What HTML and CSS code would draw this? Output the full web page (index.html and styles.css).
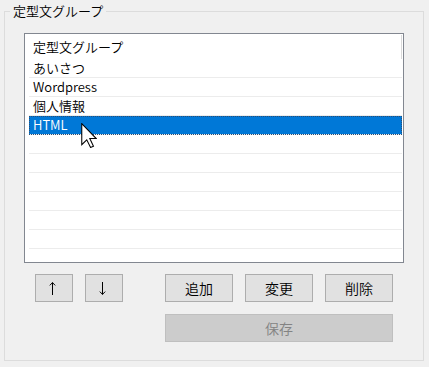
FILE: index.html
```html
<!DOCTYPE html>
<html lang="ja">
<head>
<meta charset="utf-8">
<link rel="stylesheet" href="styles.css">
</head>
<body>
<div class="group">
  <span class="legend">定型文グループ</span>
  <div class="listbox">
    <div class="row first">定型文グループ</div>
    <div class="row">あいさつ</div>
    <div class="row">Wordpress</div>
    <div class="row">個人情報</div>
    <div class="row selected">HTML</div>
    <div class="row"></div>
    <div class="row"></div>
    <div class="row"></div>
    <div class="row"></div>
    <div class="row"></div>
    <div class="row"></div>
    <span class="scrollmark"></span>
    <svg class="cursor" width="16" height="25" viewBox="0 0 12 19"><polygon points="0.5,0.5 0.5,16.5 4.3,12.8 7.2,18.6 9.4,17.6 6.6,11.8 11.5,11.8" fill="#fff" stroke="#000" stroke-width="0.8" stroke-linejoin="miter"/></svg>
  </div>
  <div class="buttons">
    <div class="btnrow">
      <button class="btn small" aria-label="↑"><svg width="7" height="13" viewBox="0 0 7 13"><path d="M3.5 0.5V13M0.8 3.4L3.5 0.6L6.2 3.4" fill="none" stroke="#000" stroke-width="1"/></svg></button>
      <button class="btn small" aria-label="↓"><svg width="7" height="13" viewBox="0 0 7 13"><path d="M3.5 0V12.5M0.8 9.6L3.5 12.4L6.2 9.6" fill="none" stroke="#000" stroke-width="1"/></svg></button>
      <button class="btn wide push">追加</button>
      <button class="btn wide">変更</button>
      <button class="btn wide">削除</button>
    </div>
    <div class="btnrow second">
      <button class="btn save" disabled>保存</button>
    </div>
  </div>
</div>
</body>
</html>
```
FILE: styles.css
```css
html, body {
  margin: 0;
  padding: 0;
  background: #f0f0f0;
}
body {
  padding: 11px 0 0 4px;
  font-family: "Noto Sans CJK JP", "Noto Sans", sans-serif;
  font-weight: 350;
  font-size: 13px;
  color: #000;
}
.group {
  position: relative;
  box-sizing: border-box;
  width: 420px;
  height: 350px;
  border: 1px solid #dcdcdc;
  padding: 21px 0 0 19px;
}
.legend {
  position: absolute;
  left: 5px;
  top: -10px;
  padding: 0 3px;
  background: #f0f0f0;
  font-size: 13px;
  line-height: 18px;
}
.listbox {
  position: relative;
  box-sizing: border-box;
  width: 380px;
  height: 230px;
  border: 1px solid #828790;
  background: #fff;
  padding: 0 1px 0 4px;
  overflow: hidden;
}
.row {
  box-sizing: border-box;
  height: 19px;
  line-height: 18px;
  padding-left: 4px;
  border-bottom: 1px solid #ececec;
  white-space: nowrap;
}
.row.first {
  height: 25px;
  line-height: 25px;
  border-bottom: none;
}
.row.selected {
  background: #0078d7;
  color: #fff;
  outline: 1px dotted #2b4f75;
  outline-offset: -1px;
}
.scrollmark {
  position: absolute;
  left: 376px;
  top: 1px;
  width: 1px;
  height: 24px;
  background: #dadada;
}
.cursor {
  position: absolute;
  left: 56px;
  top: 89px;
}
.buttons {
  padding: 11px 0 0 11px;
}
.btnrow {
  display: flex;
  gap: 12px;
}
.btnrow.second {
  margin-top: 12px;
  padding-left: 130px;
}
.btn {
  box-sizing: border-box;
  height: 28px;
  margin: 0;
  padding: 0;
  border: 1px solid #adadad;
  background: #e1e1e1;
  font-family: "Noto Sans CJK JP", sans-serif;
  font-weight: 350;
  font-size: 14px;
  color: #000;
  line-height: 26px;
  display: flex;
  align-items: center;
  justify-content: center;
}
.btn.small {
  width: 38px;
}
.btn.small svg {
  display: block;
  margin-left: -3px;
}
.btn.wide {
  width: 68px;
}
.btn.push {
  margin-left: 30px;
}
.btn.save {
  width: 228px;
  background: #cccccc;
  border-color: #bfbfbf;
  color: #838383;
}
```
